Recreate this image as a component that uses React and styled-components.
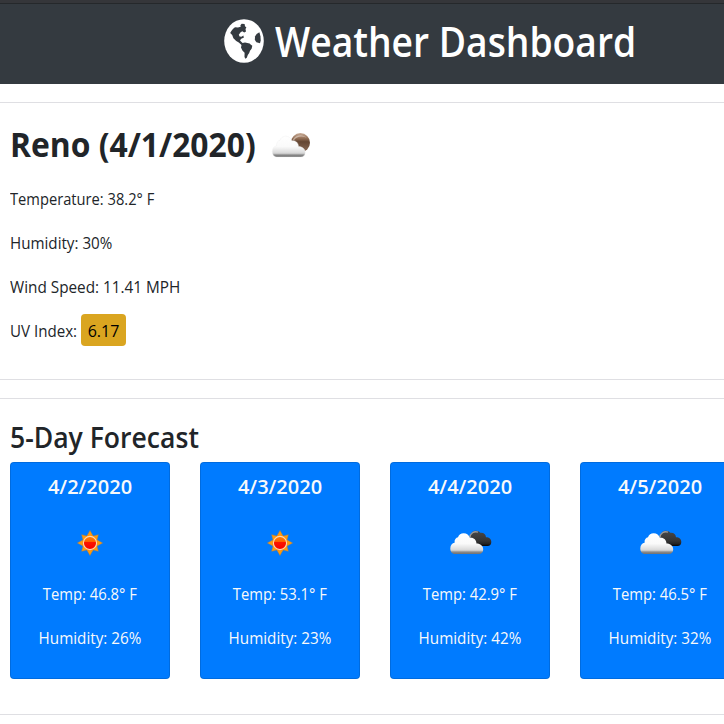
import React from 'react';
import styled, { createGlobalStyle } from 'styled-components';

const GlobalStyle = createGlobalStyle`
  *, *::before, *::after { box-sizing: border-box; }
  body {
    margin: 0;
    background: #fff;
    color: #212529;
    font-family: 'Open Sans', 'Noto Sans', sans-serif;
    font-size: 16px;
    line-height: 24px;
    overflow: hidden;
  }
`;

const Page = styled.div`
  display: flex;
  flex-direction: column;
  width: 100%;
  height: 724px;
  overflow: hidden;
`;

const Header = styled.header`
  flex: none;
  display: flex;
  height: 84px;
  padding-left: 224px;
  color: #fff;
  background: #343a40;
  border-top: 3px solid #35363a;
  box-shadow: inset 0 1px 0 #25282b;
`;

const Title = styled.h1`
  margin: 6px 0 0 11px;
  font-size: 41.5px;
  font-weight: 600;
  line-height: 64px;
  white-space: nowrap;
  transform: scaleX(0.897);
  transform-origin: left;
`;

const Rule = styled.hr`
  flex: none;
  width: 100%;
  height: 1px;
  margin: 18px 0 0;
  border: 0;
  background: #dfdfe3;
`;

const Current = styled.section`
  flex: none;
  height: 258px;
  padding: 19px 10px 0;
`;

const CityRow = styled.div`
  display: flex;
  height: 53px;
`;

const City = styled.h2`
  width: 247px;
  margin: 0 15px 0 0;
  font-size: 33.5px;
  font-weight: 700;
  line-height: 44px;
  white-space: nowrap;
  transform: scaleX(0.95);
  transform-origin: left;
`;

const Reading = styled.p`
  display: flex;
  align-items: center;
  height: 44px;
  margin: 0;
  padding-top: 4px;
`;

const Label = styled.span`
  flex: none;
  width: ${(p) => (p.$width ? `${p.$width}px` : 'auto')};
  white-space: nowrap;
  transform: scaleX(${(p) => p.$fit});
  transform-origin: left;
`;

const UvBadge = styled.span`
  width: 45px;
  height: 32px;
  margin: -2px 0 0 4px;
  color: #000;
  line-height: 34px;
  text-align: center;
  background: #daa520;
  border-radius: 4px;
`;

const Forecast = styled.section`
  flex: none;
  height: 297px;
  padding: 20px 10px 0;
`;

const ForecastTitle = styled.h3`
  height: 43px;
  margin: 0;
  font-size: 28.5px;
  font-weight: 550;
  line-height: 36px;
  transform: scaleX(0.932);
  transform-origin: left;
`;

const Cards = styled.div`
  display: flex;
  gap: 30px;
`;

const Card = styled.article`
  flex: none;
  display: flex;
  flex-direction: column;
  align-items: center;
  width: 160px;
  height: 217px;
  padding-top: 11px;
  color: #f8f9fa;
  background: #007bff;
  border: 1px solid rgba(0, 0, 0, 0.125);
  border-radius: 4px;
`;

const CardDate = styled.h4`
  margin: 0;
  font-size: 20px;
  font-weight: 600;
  line-height: 26px;
`;

const CardIcon = styled.div`
  display: flex;
  align-items: center;
  justify-content: center;
  height: 50px;
  margin: 17px 0 15px;
`;

const CardReading = styled.p`
  height: 44px;
  margin: 0;
  white-space: nowrap;
  transform: scaleX(${(p) => p.$fit});
`;

const Drawing = styled.svg`
  display: block;
  flex: none;
  overflow: visible;
  margin: ${(p) => p.$top || 0}px 0 0 ${(p) => p.$left || 0}px;
`;

function Globe() {
  return (
    <Drawing width="40" height="44" viewBox="0 0 40 44" $top={16}>
      <ellipse cx="20" cy="22" rx="19.8" ry="21.8" fill="#fff" />
      <g fill="#343a40">
        <path d="M6.2 14C7.8 11.2 9.2 9.4 11 8.3L14 8.5L16.7 7.8L16.4 6.2L17.7 4.8L20.6 5L21 7.2L22.4 8.6L21.5 10L22 12.4L20.2 13.4L18.3 12.2L16.6 13.2L14.8 15.8L15.6 17.4L17.4 17.7L19.4 16.5L19.8 18.8L17.6 19.6L16 21.2L17 22.4L18.6 23.9L21 23.6L25.6 24.6L26.6 25.6L28.3 26.8L27.6 29.8L26 31.8L25.2 34L23.8 35.9L22.8 38.8L21.4 39.8L20.5 38L20.6 33.8L18.4 31.4L17 28.6L17.5 26.1L14.8 23.4L12.2 22L9.4 19.2L8.2 16Z" />
        <path d="M35.4 13.2L32.6 15L31 17.6L30.8 20.7L32.4 23.2L36 24.2L36.7 21.4L36.5 17.6Z" />
      </g>
    </Drawing>
  );
}

const CLOUD =
  'M5 24C2 24 0.3 21.5 0.3 18.5C0.3 15.2 2.2 13.2 4.6 12.8C4.2 9.5 6 7.6 8 7.3C8.8 4.6 11 3.2 13.6 3.2C16.8 3.2 19 5 19.8 7.8C23.4 7.2 26.4 9.4 26.5 13.6C30.4 13.6 33.2 16 33.2 19.4C33.2 22.2 31.4 24 29 24Z';

function CloudFill({ id }) {
  return (
    <linearGradient id={id} x1="0" y1="0" x2="0" y2="1">
      <stop offset="0" stopColor="#fff" />
      <stop offset="0.5" stopColor="#fafafa" />
      <stop offset="0.78" stopColor="#dcdcdc" />
      <stop offset="0.84" stopColor="#c8c8c8" />
      <stop offset="0.9" stopColor="#8c8c8c" />
      <stop offset="1" stopColor="#707070" />
    </linearGradient>
  );
}

function CloudyMoon() {
  return (
    <Drawing width="39" height="25" viewBox="0 0 39 25" $top={11}>
      <defs>
        <CloudFill id="moonCloud" />
        <linearGradient id="moon" x1="0" y1="0" x2="0" y2="1">
          <stop offset="0" stopColor="#c7aa96" />
          <stop offset="0.25" stopColor="#98745b" />
          <stop offset="0.45" stopColor="#654733" />
          <stop offset="1" stopColor="#8a6c57" />
        </linearGradient>
      </defs>
      <circle cx="28.4" cy="9.7" r="9.6" fill="url(#moon)" />
      <path d="M20.8 6.8C23 1.8 30.5 0.4 34.7 4.8C30 2.4 24.8 3.2 22 7.2Z" fill="#e0cfc2" opacity="0.65" />
      <path d={CLOUD} fill="url(#moonCloud)" stroke="#eee" strokeWidth="0.4" />
    </Drawing>
  );
}

function Sun() {
  const rays = [0, 45, 90, 135, 180, 225, 270, 315];
  return (
    <Drawing width="26" height="28" viewBox="-13 -14 26 28" $top={1}>
      <defs>
        <linearGradient id="sunCore" x1="0" y1="0" x2="0" y2="1">
          <stop offset="0" stopColor="#ff7a00" />
          <stop offset="0.38" stopColor="#ff6500" />
          <stop offset="0.46" stopColor="#fb1500" />
          <stop offset="1" stopColor="#f60000" />
        </linearGradient>
      </defs>
      {rays.map((angle) => (
        <path
          key={angle}
          d={angle % 90 === 0 ? 'M-3.1 -7L0 -12.6L3.1 -7Z' : 'M-3.1 -6.6L0 -11.8L3.1 -6.6Z'}
          fill="#ff9a0c"
          stroke="#b57f3c"
          strokeWidth="0.4"
          transform={`rotate(${angle})`}
        />
      ))}
      <circle r="7.7" fill="#ff9214" />
      <circle r="6.6" fill="url(#sunCore)" stroke="#ffd9b0" strokeWidth="1.1" />
    </Drawing>
  );
}

function DarkClouds({ id }) {
  return (
    <Drawing width="42" height="25" viewBox="0 0 42 25" $left={2}>
      <defs>
        <CloudFill id={`${id}Front`} />
        <linearGradient id={`${id}Back`} x1="0" y1="0" x2="0" y2="1">
          <stop offset="0" stopColor="#484848" />
          <stop offset="0.65" stopColor="#343434" />
          <stop offset="0.84" stopColor="#242424" />
          <stop offset="1" stopColor="#050505" />
        </linearGradient>
      </defs>
      <path
        d="M20 8C20 3.4 22.5 0.8 26 0.8C28 0.8 29.4 1.6 30.3 2.8C33.6 2.4 35.7 4.2 36 7.2C39.3 7.2 41.3 9.2 41.3 12C41.3 14.5 39.8 16.1 37.5 16.1H24Z"
        fill={`url(#${id}Back)`}
      />
      <path d="M19.8 7.6C20.2 3.4 24 0.7 28 2.2" fill="none" stroke="#9a9a9a" strokeWidth="1.4" />
      <path d={CLOUD} fill={`url(#${id}Front)`} />
    </Drawing>
  );
}

const DAYS = [
  { date: '4/2/2020', sunny: true, temp: '46.8', humidity: 26 },
  { date: '4/3/2020', sunny: true, temp: '53.1', humidity: 23 },
  { date: '4/4/2020', sunny: false, temp: '42.9', humidity: 42 },
  { date: '4/5/2020', sunny: false, temp: '46.5', humidity: 32 },
];

export default function App() {
  return (
    <Page>
      <GlobalStyle />
      <Header>
        <Globe />
        <Title>Weather Dashboard</Title>
      </Header>
      <Rule />
      <Current>
        <CityRow>
          <City>Reno (4/1/2020)</City>
          <CloudyMoon />
        </CityRow>
        <Reading>
          <Label $fit={0.918}>Temperature: 38.2° F</Label>
        </Reading>
        <Reading>
          <Label $fit={0.948}>Humidity: 30%</Label>
        </Reading>
        <Reading>
          <Label $fit={0.957}>Wind Speed: 11.41 MPH</Label>
        </Reading>
        <Reading>
          <Label $fit={0.944} $width={67}>UV Index:</Label>
          <UvBadge>6.17</UvBadge>
        </Reading>
      </Current>
      <Rule />
      <Rule />
      <Forecast>
        <ForecastTitle>5-Day Forecast</ForecastTitle>
        <Cards>
          {DAYS.map((day) => (
            <Card key={day.date}>
              <CardDate>{day.date}</CardDate>
              <CardIcon>
                {day.sunny ? <Sun /> : <DarkClouds id={`cloud${day.humidity}`} />}
              </CardIcon>
              <CardReading $fit={0.925}>Temp: {day.temp}° F</CardReading>
              <CardReading $fit={0.952}>Humidity: {day.humidity}%</CardReading>
            </Card>
          ))}
        </Cards>
      </Forecast>
      <Rule />
    </Page>
  );
}
